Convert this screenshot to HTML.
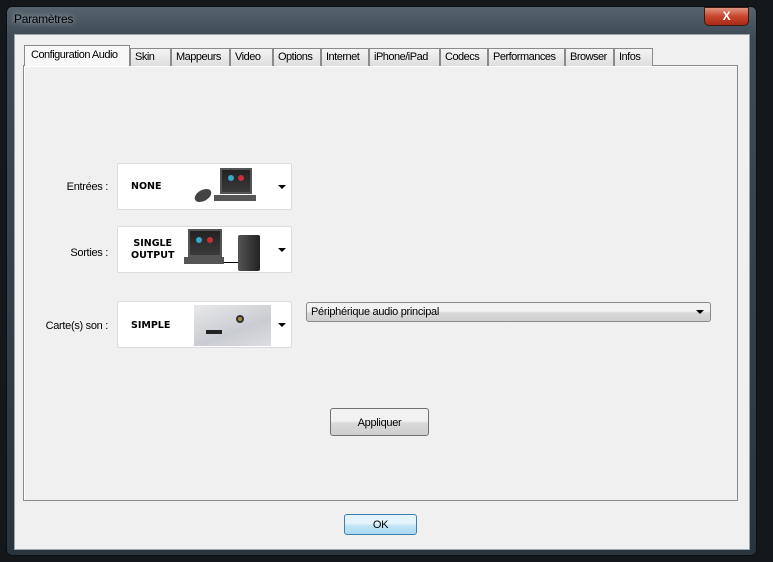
<!DOCTYPE html>
<html><head><meta charset="utf-8"><style>
*{margin:0;padding:0;box-sizing:border-box}
body{width:773px;height:562px;overflow:hidden;background:#15181b;font-family:"Liberation Sans",sans-serif;font-size:11px;color:#000;position:relative;letter-spacing:-0.3px}
.abs{position:absolute}
.frame{left:6px;top:6px;width:751px;height:550px;background:linear-gradient(#55636e,#3e4b55 30px,#2a343c);border:1px solid #0b0f12;border-radius:6px}
.client{left:14px;top:34px;width:736px;height:516px;background:#f0f0f0;border:1px solid #9aa5ad}
.title{left:14px;top:12px;color:#000;font-size:12px;text-shadow:0 0 6px #cfd8de}
.close{left:704px;top:7px;width:45px;height:19px;border-radius:0 0 5px 5px;background:linear-gradient(#e09580,#c8452c 50%,#a62a16);border:1px solid #3a1a12;color:#fff;font-weight:bold;text-align:center;font-size:12px;line-height:17px}
.panel{left:23px;top:65px;width:715px;height:436px;background:#f0f0f0;border:1px solid #8a8a8a;box-shadow:inset 1px 1px 0 #fff}
.tab{top:48px;height:18px;border:1px solid #8a8a8a;border-bottom:none;background:linear-gradient(#f4f4f4,#dedede);font-size:11px;line-height:16px;padding-left:4px;white-space:nowrap;overflow:hidden;letter-spacing:-0.5px}
.tab.sel{top:45px;height:21px;background:#f8f8f8;z-index:2;padding-left:6px;line-height:18px}
.lbl{font-size:11px;text-align:right;width:70px;left:38px}
.box{left:117px;width:175px;height:47px;background:#fff;border:1px solid #dcdcdc;border-radius:2px}
.box b{position:absolute;font-family:"DejaVu Sans",sans-serif;font-size:9.5px;font-weight:900;text-align:center;line-height:12px;letter-spacing:0}
.arr{position:absolute;right:5px;top:21px;width:0;height:0;border-left:4px solid transparent;border-right:4px solid transparent;border-top:4px solid #000}
.btn{border:1px solid #707070;border-radius:3px;background:linear-gradient(#f2f2f2 45%,#d9d9d9 55%,#cfcfcf);text-align:center;font-size:11px}
</style></head><body>
<div class="abs frame"></div>
<div class="abs title">Paramètres</div>
<div class="abs close">X</div>
<div class="abs client"></div>
<div class="abs panel"></div>
<div class="abs tab sel" style="left:24px;width:106px">Configuration Audio</div>
<div class="abs tab" style="left:130px;width:41px">Skin</div>
<div class="abs tab" style="left:171px;width:59px">Mappeurs</div>
<div class="abs tab" style="left:230px;width:43px">Video</div>
<div class="abs tab" style="left:273px;width:48px">Options</div>
<div class="abs tab" style="left:321px;width:48px">Internet</div>
<div class="abs tab" style="left:369px;width:71px">iPhone/iPad</div>
<div class="abs tab" style="left:440px;width:48px">Codecs</div>
<div class="abs tab" style="left:488px;width:77px">Performances</div>
<div class="abs tab" style="left:565px;width:49px">Browser</div>
<div class="abs tab" style="left:614px;width:39px">Infos</div>

<div class="abs lbl" style="top:181px">Entrées :</div>
<div class="abs lbl" style="top:247px">Sorties :</div>
<div class="abs lbl" style="top:320px">Carte(s) son :</div>

<div class="abs box" style="top:163px">
 <b style="left:13px;top:17px">NONE</b>
 <div class="abs" style="left:102px;top:4px;width:32px;height:26px;background:linear-gradient(#222,#3a3a3a);border:2px solid #555"><div class="abs" style="left:6px;top:5px;width:6px;height:6px;border-radius:50%;background:#3aa6c8"></div><div class="abs" style="left:16px;top:5px;width:6px;height:6px;border-radius:50%;background:#c8303a"></div></div>
 <div class="abs" style="left:96px;top:31px;width:42px;height:6px;background:#555"></div>
 <div class="abs" style="left:76px;top:26px;width:18px;height:11px;border-radius:50%;background:#444;transform:rotate(-30deg)"></div>
 <div class="arr"></div>
</div>
<div class="abs box" style="top:226px">
 <b style="left:13px;top:11px">SINGLE<br>OUTPUT</b>
 <div class="abs" style="left:70px;top:2px;width:34px;height:28px;background:linear-gradient(#222,#3a3a3a);border:2px solid #555"><div class="abs" style="left:6px;top:6px;width:6px;height:6px;border-radius:50%;background:#3aa6c8"></div><div class="abs" style="left:17px;top:6px;width:6px;height:6px;border-radius:50%;background:#c8303a"></div></div>
 <div class="abs" style="left:66px;top:30px;width:40px;height:7px;background:#555"></div>
 <div class="abs" style="left:106px;top:35px;width:16px;height:1px;background:#000"></div>
 <div class="abs" style="left:120px;top:8px;width:22px;height:36px;background:linear-gradient(90deg,#555,#222);border-radius:2px"></div>
 <div class="arr"></div>
</div>
<div class="abs box" style="top:301px">
 <b style="left:13px;top:18px">SIMPLE</b>
 <div class="abs" style="left:76px;top:3px;width:77px;height:41px;background:linear-gradient(160deg,#e8e8ec,#c9ccd2 60%,#dcdde2)"><div class="abs" style="left:42px;top:10px;width:8px;height:8px;border-radius:50%;background:#a88a3a;border:2px solid #333"></div><div class="abs" style="left:12px;top:25px;width:16px;height:4px;background:#222"></div></div>
 <div class="arr"></div>
</div>

<div class="abs btn" style="left:306px;top:302px;width:405px;height:20px;text-align:left;padding-left:4px;line-height:18px;border-color:#8a8a8a">Périphérique audio principal<div class="arr" style="top:7px;right:6px"></div></div>
<div class="abs btn" style="left:330px;top:408px;width:99px;height:28px;line-height:28px">Appliquer</div>
<div class="abs btn" style="left:344px;top:514px;width:73px;height:21px;line-height:20px;border-color:#3c7fb1;background:linear-gradient(#e5f4fc 45%,#c4e5f6 55%,#a9d9f2)">OK</div>
</body></html>
